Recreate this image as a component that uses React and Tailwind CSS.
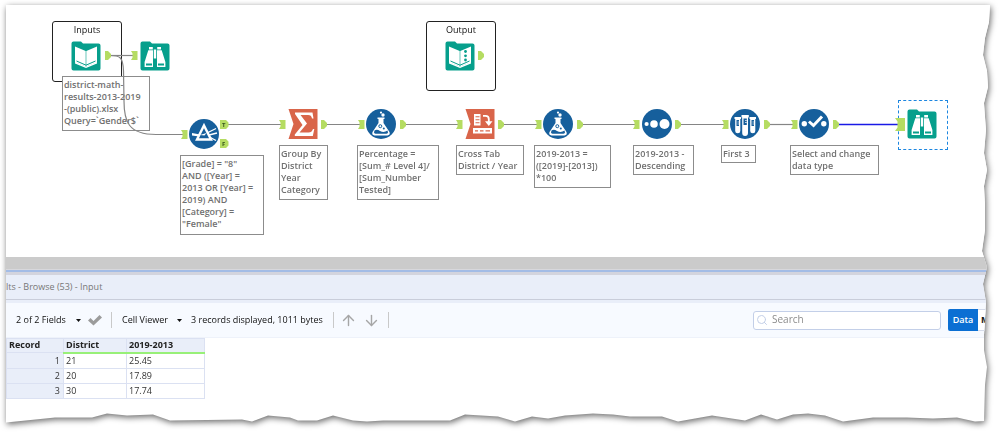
import React from 'react';
import { ArrowDown, ArrowUp, Search } from 'lucide-react';

// Torn paper outline: straight top and left, ragged right and bottom
const rightEdge = [
  [0, 0], [1, 17], [5, 33], [7, 50], [3, 66], [2, 82], [6, 98], [5, 112], [4, 125], [6, 148],
  [3, 165], [6, 181], [5, 200], [5, 225], [8, 246], [3, 262], [7, 279], [4, 297], [6, 330],
  [6, 345], [3, 362], [5, 380], [6, 416],
];

const bottomEdge = [
  [969, 1], [951, 5], [927, 4], [901, 5], [867, 5], [837, 1], [819, 7], [802, 9], [787, 8],
  [771, 3], [755, 8], [739, 2], [706, 7], [689, 4], [672, 1], [656, 6], [624, 6], [607, 8],
  [587, 9], [559, 7], [542, 4], [526, 6], [509, 1], [492, 6], [459, 8], [444, 2], [377, 2],
  [361, 1], [347, 2], [327, 7], [311, 2], [292, 2], [284, 5], [262, 7], [246, 1], [236, 3],
  [164, 2], [147, 8], [121, 7], [101, 9], [86, 5], [49, 5], [0, 0],
];

const tornEdge = `polygon(${[
  '0 0',
  ...rightEdge.map(([inset, y]) => `calc(100% - ${inset}px) ${y}px`),
  ...bottomEdge.map(([x, inset]) => `${(x / 984) * 100}% calc(100% - ${inset}px)`),
].join(', ')})`;

const FolderBase = () => (
  <path d="M0.5 2.5Q0.5 0.5 2.5 0.5H10L12 2.5H27.5Q29.5 2.5 29.5 4.5V27.5Q29.5 29.5 27.5 29.5H2.5Q0.5 29.5 0.5 27.5Z" fill="#069f8c" />
);

const InputIcon = () => (
  <>
    <FolderBase />
    <path d="M4 5.5L14.7 10V25.5L4 21.5Z M26 5.5L15.3 10V25.5L26 21.5Z" fill="#fff" />
    <path d="M5.5 20L15 24.2L24.5 20" stroke="#069f8c" strokeWidth="1" fill="none" />
    <path d="M4 21L15 25.5L26 21V22.5L15 27L4 22.5Z" fill="#fff" />
  </>
);

const OutputIcon = () => (
  <>
    <InputIcon />
    <circle cx="20.5" cy="10.5" r="1.4" fill="#069f8c" />
    <circle cx="20.5" cy="14.8" r="1.4" fill="#069f8c" />
    <circle cx="20.5" cy="19" r="1.4" fill="#069f8c" />
  </>
);

const BrowseIcon = () => (
  <>
    <FolderBase />
    <path d="M9 6H12.8V8.5H9Z M17.2 6H21V8.5H17.2Z" fill="#fff" />
    <path d="M8.3 9.3H13V26H4.6V21Z M21.7 9.3H17V26H25.4V21Z" fill="#fff" />
    <path d="M13.8 8.5H16.2V17.5H13.8Z" fill="#fff" />
    <path d="M6 22.4H12V24.6H6Z M18 22.4H24V24.6H18Z" fill="#069f8c" />
  </>
);

const FilterIcon = () => (
  <>
    <circle cx="15" cy="15" r="15" fill="#165f9c" />
    <path d="M3 14L11 15.5L10 17.5L3 16.5Z" fill="#fff" />
    <path d="M19 13.5L27 9.5M20 16L28 14M20.5 18L27 21.5" stroke="#fff" strokeWidth="1.3" />
    <path d="M15 6.5L22 20.5H8Z" fill="#165f9c" stroke="#fff" strokeWidth="2.4" />
    <path d="M11 16L17.5 14L15.5 16.5Z" fill="#fff" />
  </>
);

const SummarizeIcon = () => (
  <>
    <path d="M0.5 0H29.5V30H0.5L5.5 15Z" fill="#d9654a" />
    <path d="M7 3.5H24.5L25.5 9.5H24C23.5 7 22.5 6 20 6H12.5L19 14.5L11.5 23.5H20.5C23 23.5 24 22.5 25 20H26.3L24.8 27H6.8V25.5L14.5 16L7 5Z" fill="#fff" />
  </>
);

const FormulaIcon = () => (
  <>
    <circle cx="15" cy="15" r="15" fill="#165f9c" />
    <circle cx="15" cy="3.6" r="1.1" fill="#fff" />
    <circle cx="17" cy="6" r="1.7" fill="#fff" />
    <path d="M11.5 8.5H18.5V10H17.5V14L23.5 23Q24.5 26 21.5 26.5H8.5Q5.5 26 6.5 23L12.5 14V10H11.5Z" fill="#fff" />
    <path d="M8.5 21.5Q11 20 14 22Q18 24 21.5 21.5L22 23.5Q22 24.5 20.5 24.8H9.5Q8 24.5 8 23.5Z" fill="#165f9c" />
    <circle cx="14.3" cy="17.2" r="1.5" fill="none" stroke="#165f9c" strokeWidth="1" />
    <circle cx="17.8" cy="19.4" r="1" fill="#165f9c" />
  </>
);

const CrossTabIcon = () => (
  <>
    <path d="M0.5 0H29.5V30H0.5L5.5 15Z" fill="#d9654a" />
    <path d="M9 5H15.5V16.5H9Z M8 19H27V24.5H8Z" fill="#fff" />
    <path d="M10.5 7.8H14.5M10.5 10.8H14.5M10.5 13.8H14.5" stroke="#d9654a" strokeWidth="1.1" />
    <path d="M10 21.8H13M15 21.8H18.5M20.5 21.8H25" stroke="#d9654a" strokeWidth="1.3" />
    <path d="M18 6.8H20.5Q23.8 6.8 23.8 10V13" stroke="#fff" strokeWidth="1.8" fill="none" />
    <path d="M20 12.2H27.5L23.8 17Z" fill="#fff" />
  </>
);

const SortIcon = () => (
  <>
    <circle cx="15" cy="15" r="15" fill="#165f9c" />
    <circle cx="4.6" cy="15" r="2.1" fill="#fff" />
    <circle cx="12" cy="15" r="3.8" fill="#fff" />
    <circle cx="22.5" cy="15" r="5" fill="#fff" />
  </>
);

const SampleIcon = () => (
  <>
    <circle cx="15" cy="15" r="15" fill="#165f9c" />
    <path d="M4.5 8H11V10H10.3V22Q10.3 24.2 7.8 24.2Q5.2 24.2 5.2 22V10H4.5Z M19.5 8H26V10H25.3V22Q25.3 24.2 22.8 24.2Q20.2 24.2 20.2 22V10H19.5Z" fill="#fff" />
    <path d="M11.5 6H18.8V8.5H18V24Q18 27 15.1 27Q12.2 27 12.2 24V8.5H11.5Z" fill="#fff" />
    <path d="M6.5 11H9V17H6.5Z M21.5 11H24V17H21.5Z M13.5 9.5H16.8V16H13.5Z" fill="#165f9c" />
    <path d="M7.5 13H9M7.5 15H9M22.5 13H24M22.5 15H24M15 11.5H16.8M15 13.5H16.8" stroke="#fff" strokeWidth="0.7" />
  </>
);

const SelectIcon = () => (
  <>
    <circle cx="15" cy="15" r="15" fill="#165f9c" />
    <circle cx="5.3" cy="14.8" r="2.7" fill="#fff" />
    <circle cx="24.8" cy="14.8" r="2.7" fill="#fff" />
    <path d="M10 12.5L14.5 16.5L23 7.5" stroke="#fff" strokeWidth="3" fill="none" />
  </>
);

const tools = [
  { id: 'input', name: 'Input Data', Icon: InputIcon, place: 'left-[65px] top-[36px]' },
  { id: 'browse-input', name: 'Browse', Icon: BrowseIcon, place: 'left-[134px] top-[36px]' },
  { id: 'output', name: 'Output', Icon: OutputIcon, place: 'left-[439px] top-[36px]' },
  { id: 'filter', name: 'Filter', Icon: FilterIcon, place: 'left-[183px] top-[114px]' },
  { id: 'summarize', name: 'Summarize', Icon: SummarizeIcon, place: 'left-[282px] top-[104px]' },
  { id: 'formula-1', name: 'Formula', Icon: FormulaIcon, place: 'left-[360px] top-[104px]' },
  { id: 'cross-tab', name: 'Cross Tab', Icon: CrossTabIcon, place: 'left-[459px] top-[104px]' },
  { id: 'formula-2', name: 'Formula', Icon: FormulaIcon, place: 'left-[537px] top-[104px]' },
  { id: 'sort', name: 'Sort', Icon: SortIcon, place: 'left-[636px] top-[104px]' },
  { id: 'sample', name: 'Sample', Icon: SampleIcon, place: 'left-[724px] top-[104px]' },
  { id: 'select', name: 'Select', Icon: SelectIcon, place: 'left-[793px] top-[104px]' },
  { id: 'browse-result', name: 'Browse', Icon: BrowseIcon, place: 'left-[901px] top-[104px]' },
];

const notes = [
  { text: 'district-math-\nresults-2013-2019\n-(public).xlsx\nQuery=`Gender$`', place: 'left-[56px] top-[71px] w-[88px] h-[55px]' },
  { text: '[Grade] = "8"\nAND ([Year] =\n2013 OR [Year] =\n2019) AND\n[Category] =\n"Female"', place: 'left-[174px] top-[150px] w-[84px] h-[80px]' },
  { text: 'Group By\nDistrict\nYear\nCategory', place: 'left-[273px] top-[140px] w-[49px] h-[55px]' },
  { text: 'Percentage =\n[Sum_# Level 4]/\n[Sum_Number\nTested]', place: 'left-[351px] top-[140px] w-[82px] h-[55px]' },
  { text: 'Cross Tab\nDistrict / Year', place: 'left-[450px] top-[140px] w-[68px] h-[30px]' },
  { text: '2019-2013 =\n([2019]-[2013])\n*100', place: 'left-[528px] top-[140px] w-[77px] h-[43px]' },
  { text: '2019-2013 -\nDescending', place: 'left-[627px] top-[140px] w-[61px] h-[30px]' },
  { text: 'First 3', place: 'left-[715px] top-[140px] w-[35px] h-[18px]' },
  { text: 'Select and change\ndata type', place: 'left-[784px] top-[140px] w-[89px] h-[30px]' },
];

// x, y of each anchor's top left corner
const inAnchors = [
  [125, 46], [175, 125], [273, 115], [352, 115], [450, 115], [529, 115], [627, 115], [716, 115], [785, 115],
];
const outAnchors = [
  [99, 46], [472, 46], [315, 115], [394, 115], [492, 115], [571, 115], [669, 115], [758, 115], [827, 115],
];

const wires = [
  'M104 50.5H127',
  'M104 50.5C114 50.5 117 52 117.5 66L118 96C118 116 122 129.5 150 129.5H177',
  'M222 119.5H275', 'M321 119.5H354', 'M400 119.5H452', 'M498 119.5H531',
  'M577 119.5H629', 'M675 119.5H718', 'M764 119.5H787',
];

const records = [
  { district: '21', change: '25.45' },
  { district: '20', change: '17.89' },
  { district: '30', change: '17.74' },
];

const Wires = () => (
  <svg className="absolute left-0 top-0 h-[252px] w-[984px]" viewBox="0 0 984 252" fill="none">
    {wires.map((d) => (
      <path key={d} d={d} stroke="#858585" strokeWidth="1.2" />
    ))}
    <path d="M832 119.5H892" stroke="#1a1ae6" strokeWidth="1.6" />
    {inAnchors.map(([x, y]) => (
      <path key={`${x}-${y}`} d={`M${x} ${y}h6.5v9h-6.5l1.5-2.5v-4z`} fill="#b5dc62" />
    ))}
    {outAnchors.map(([x, y]) => (
      <path key={`${x}-${y}`} d={`M${x} ${y}h3l3 3v3l-3 3h-3z`} fill="#b5dc62" />
    ))}
    <path d="M889 113h10v13h-10l2.5-3.5v-6z" fill="#b5dc62" />
    <path d="M214 115h6l2.5 2.5v4l-2.5 2.5h-6z M214 134h6l2.5 2.5v4l-2.5 2.5h-6z" fill="#b5dc62" />
    <g fill="#35551c" fontSize="6" fontWeight="700" fontFamily="Open Sans, sans-serif">
      <text x="216" y="122">T</text>
      <text x="216" y="141">F</text>
    </g>
  </svg>
);

const WorkflowCanvas = () => (
  <section aria-label="Workflow" className="relative h-[252px] overflow-hidden bg-white">
    <div className="absolute left-[46px] top-[16px] h-[61px] w-[70px] rounded-[3px] border border-[#222] text-center text-[9px] leading-[16px] text-[#111]">
      Inputs
    </div>
    <div className="absolute left-[420px] top-[16px] h-[70px] w-[70px] rounded-[3px] border border-[#222] text-center text-[9px] leading-[16px] text-[#111]">
      Output
    </div>
    {notes.map((note) => (
      <p
        key={note.text}
        className={`absolute whitespace-pre border border-[#8c8c8c] bg-white pl-px pt-[2px] text-[9px] font-semibold leading-[12px] text-[#707070] ${note.place}`}
      >
        {note.text}
      </p>
    ))}
    <div className="absolute left-[892px] top-[95px] h-[50px] w-[50px] border border-dashed border-[#1c86e0]" />
    <Wires />
    {tools.map(({ id, name, Icon, place }) => (
      <svg key={id} role="img" aria-label={name} viewBox="0 0 30 30" className={`absolute h-[30px] w-[30px] ${place}`}>
        <Icon />
      </svg>
    ))}
  </section>
);

const Caret = () => (
  <svg className="h-[3px] w-[5px]" viewBox="0 0 5 3">
    <path d="M0 0H5L2.5 3Z" fill="#111" />
  </svg>
);

const Divider = () => <span className="h-4 w-px bg-[#c9c9c9]" />;

const Toolbar = () => (
  <div className="flex h-[35px] items-center overflow-hidden border-b border-[#eef2fa] bg-[#f7faff] pl-[10px] text-[#111]">
    <button type="button" className="flex w-[65px] items-center justify-between whitespace-nowrap">
      2 of 2 Fields <Caret />
    </button>
    <button type="button" aria-label="Apply" className="ml-[7px]">
      <svg className="h-[12px] w-[14px]" viewBox="0 0 14 12">
        <path d="M0 6.5L2.5 4L5.5 7L11.5 1L14 3.5L5.5 11.5Z" fill="#9b9b9b" />
      </svg>
    </button>
    <span className="ml-[9px] flex"><Divider /></span>
    <button type="button" className="ml-[10px] flex w-[60px] items-center justify-between whitespace-nowrap">
      Cell Viewer <Caret />
    </button>
    <span className="ml-[9px] w-[142px] whitespace-nowrap">3 records displayed, 1011 bytes</span>
    <Divider />
    <button type="button" aria-label="Previous" className="ml-[6px] text-[#a6a6a6]">
      <ArrowUp size={17} strokeWidth={2} />
    </button>
    <button type="button" aria-label="Next" className="ml-[6px] mr-[8px] text-[#a6a6a6]">
      <ArrowDown size={17} strokeWidth={2} />
    </button>
    <Divider />
    <label className="ml-auto flex h-[19px] w-[188px] items-center rounded-[3px] border border-[#c3cfe8] bg-white pl-[2px]">
      <Search size={12} strokeWidth={2} className="shrink-0 text-[#c3cfe8]" />
      <input
        type="text"
        aria-label="Search"
        placeholder="Search"
        className="ml-[4px] w-full min-w-0 bg-transparent pb-[3px] text-[10px] leading-[14px] outline-none placeholder:text-[#8c8c8c]"
      />
    </label>
    <button type="button" className="ml-[7px] h-[22px] w-[30px] shrink-0 rounded-l-[2px] bg-[#0b6fd3] font-semibold text-white">
      Data
    </button>
    <button type="button" aria-label="Metadata" className="h-[22px] w-[12px] shrink-0 border-y border-[#d5dbe9] bg-white pl-[3px] text-left font-bold">
      M
    </button>
  </div>
);

const ResultsTable = () => (
  <table className="w-[198px] table-fixed border-collapse text-left leading-[14px] text-[#333]">
    <thead>
      <tr className="h-[14px] bg-[#e9eef9] align-top leading-[12px] text-[#222]">
        <th className="w-[57px] border border-[#dbe1f2] py-0 pl-[2px] font-bold">Record</th>
        <th className="w-[63px] border border-b-2 border-[#dbe1f2] border-b-[#98f078] py-0 pl-[2px] font-bold">District</th>
        <th className="w-[78px] border border-b-2 border-[#dbe1f2] border-b-[#98f078] py-0 pl-[2px] font-bold">2019-2013</th>
      </tr>
    </thead>
    <tbody>
      {records.map((record, index) => (
        <tr key={record.district} className="h-[15px] align-bottom">
          <td className="border border-[#dbe1f2] bg-[#e9eef9] py-0 pr-[3px] text-right">{index + 1}</td>
          <td className="border border-[#dbe1f2] py-0 pl-[2px]">{record.district}</td>
          <td className="border border-[#dbe1f2] py-0 pl-[2px]">{record.change}</td>
        </tr>
      ))}
    </tbody>
  </table>
);

const App = () => (
  <div className="bg-white pb-[9px] pl-[6px] pr-[9px] pt-[5px] font-['Open_Sans','Noto_Sans',sans-serif]">
    <div className="drop-shadow-[1px_2px_3px_rgba(0,0,0,0.6)]">
      <main className="bg-white pb-[24px] text-[9px]" style={{ clipPath: tornEdge }}>
        <WorkflowCanvas />
        <div className="h-[13px] border-b border-[#d8d8dc] bg-[#cbcbcb]" />
        <div className="h-[5px] border-b-2 border-t-2 border-b-[#d3d4de] border-t-[#a3bce6] bg-[#d3d4de]" />
        <h2 className="h-[25px] border-b border-[#c9cdda] bg-[#e9eef9] leading-[24px] text-[#777]">
          lts - Browse (53) - Input
        </h2>
        <div className="h-[3px] bg-[#e9eef9]" />
        <Toolbar />
        <ResultsTable />
      </main>
    </div>
  </div>
);

export default App;
